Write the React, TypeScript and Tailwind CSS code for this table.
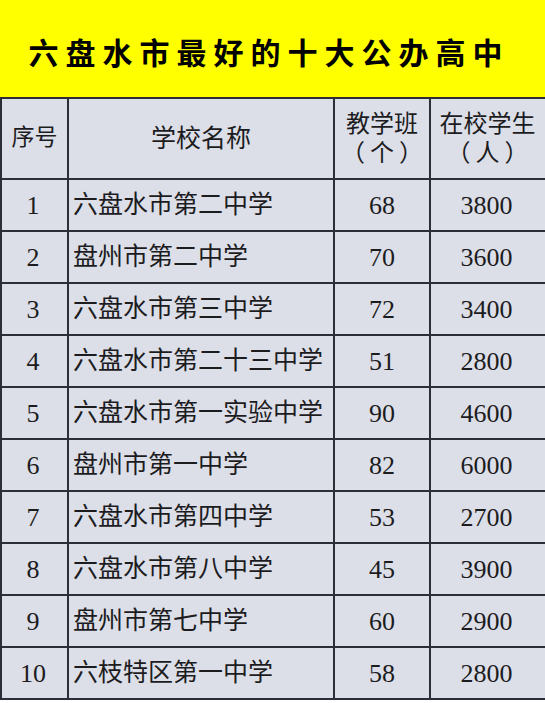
import React from 'react';

interface School {
  id: number;
  name: string;
  classes: number;
  students: number;
}

const schools: School[] = [
  { id: 1, name: '六盘水市第二中学', classes: 68, students: 3800 },
  { id: 2, name: '盘州市第二中学', classes: 70, students: 3600 },
  { id: 3, name: '六盘水市第三中学', classes: 72, students: 3400 },
  { id: 4, name: '六盘水市第二十三中学', classes: 51, students: 2800 },
  { id: 5, name: '六盘水市第一实验中学', classes: 90, students: 4600 },
  { id: 6, name: '盘州市第一中学', classes: 82, students: 6000 },
  { id: 7, name: '六盘水市第四中学', classes: 53, students: 2700 },
  { id: 8, name: '六盘水市第八中学', classes: 45, students: 3900 },
  { id: 9, name: '盘州市第七中学', classes: 60, students: 2900 },
  { id: 10, name: '六枝特区第一中学', classes: 58, students: 2800 },
];

const serif = "font-['Liberation_Serif','Noto_Sans_CJK_SC',serif]";

export default function App() {
  return (
    <div className="w-[545px] h-[703px] overflow-hidden bg-white text-[#1c1c1e]">
      {/* Title */}
      <div className="h-[97px] bg-[#ffff00] flex items-center justify-center pt-[4px] pr-[14px]">
        <h1 className="font-['Noto_Sans_CJK_SC',sans-serif] font-bold text-[30px] tracking-[7px] pl-[7px] text-black leading-none whitespace-nowrap">
          六盘水市最好的十大公办高中
        </h1>
      </div>

      {/* Table */}
      <div className="overflow-hidden">
        <table className={`w-[552px] border-collapse table-fixed bg-[#dcdfe8] ${serif}`}>
          <colgroup>
            <col className="w-[67px]" />
            <col className="w-[266px]" />
            <col className="w-[96px]" />
            <col />
          </colgroup>
          <thead>
            <tr className="h-[81px]">
              <th className="border-2 border-[#2b2e36] font-normal text-[23px] text-center">序号</th>
              <th className="border-2 border-[#2b2e36] font-normal text-[25px] text-center">学校名称</th>
              <th className="border-2 border-[#2b2e36] font-normal text-[24px] leading-[29px] text-center">
                教学班
                <br />
                <span className="tracking-[5px] pl-[5px]">（个）</span>
              </th>
              <th className="border-2 border-[#2b2e36] font-normal text-[24px] leading-[29px] text-center pr-[6px]">
                在校学生
                <br />
                <span className="tracking-[5px] pl-[5px]">（人）</span>
              </th>
            </tr>
          </thead>
          <tbody>
            {schools.map((s) => (
              <tr key={s.id} className="h-[52px]">
                <td className="border-2 border-[#2b2e36] text-[26px] text-center pr-[3px]">{s.id}</td>
                <td className="border-2 border-[#2b2e36] text-[25px] pl-[4px] whitespace-nowrap">{s.name}</td>
                <td className="border-2 border-[#2b2e36] text-[26px] text-center">{s.classes}</td>
                <td className="border-2 border-[#2b2e36] text-[26px] text-center pr-[8px]">{s.students}</td>
              </tr>
            ))}
          </tbody>
        </table>
      </div>
    </div>
  );
}
